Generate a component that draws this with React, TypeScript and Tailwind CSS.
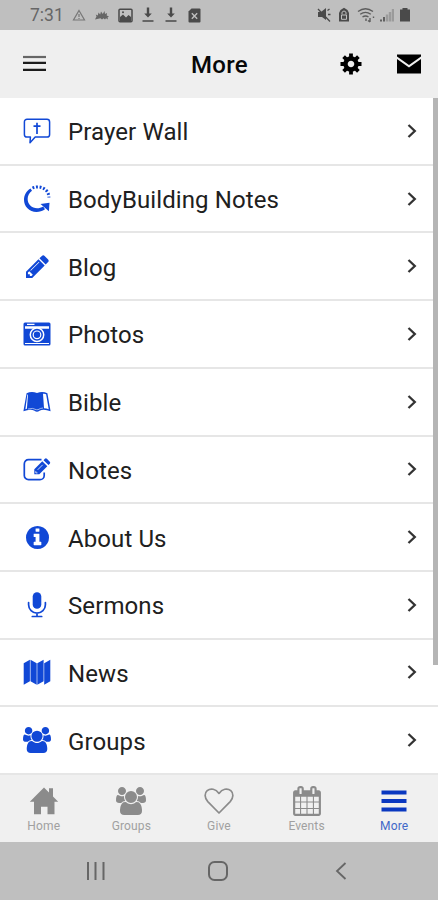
import React from 'react';

const GROUP_PATH =
  'M593 896q-162 5-265 128h-134q-82 0-138-40.5t-56-118.5q0-353 124-353 6 0 43.5 21t97.5 42.5 119 21.5q67 0 133-23-5 37-5 66 0 139 81 256zm1071 637q0 120-73 189.5t-194 69.5h-874q-121 0-194-69.5t-73-189.5q0-53 3.5-103.5t14-109 26.5-108.5 43-97.5 62-81 85.5-53.5 111.5-20q10 0 43 21.5t73 48 107 48 135 21.5 135-21.5 107-48 73-48 43-21.5q61 0 111.5 20t85.5 53.5 62 81 43 97.5 26.5 108.5 14 109 3.5 103.5zm-1024-1277q0 106-75 181t-181 75-181-75-75-181 75-181 181-75 181 75 75 181zm704 384q0 159-112.5 271.5t-271.5 112.5-271.5-112.5-112.5-271.5 112.5-271.5 271.5-112.5 271.5 112.5 112.5 271.5zm576 225q0 78-56 118.5t-138 40.5h-134q-103-123-265-128 81-117 81-256 0-29-5-66 66 23 133 23 59 0 119-21.5t97.5-42.5 43.5-21q124 0 124 353zm-128-609q0 106-75 181t-181 75-181-75-75-181 75-181 181-75 181 75 75 181z';

const GroupIcon = ({ className }: { className: string }) => (
  <svg viewBox="0 0 1920 1792" className={className} fill="currentColor">
    <path d={GROUP_PATH} />
  </svg>
);

const iconClass = 'w-7 h-7 shrink-0';

const PrayerIcon = () => (
  <svg viewBox="0 0 28 28" className={iconClass} fill="none" stroke="currentColor" strokeWidth="1.5" strokeLinejoin="round">
    <path d="M4 2.300h20a2.600 2.600 0 0 1 2.600 2.600v12.500a2.600 2.600 0 0 1-2.600 2.600H12.200L7 25.700 7.400 20H4a2.600 2.600 0 0 1-2.600-2.600V4.900A2.600 2.600 0 0 1 4 2.300z" />
    <path d="M14 5.800v11.200M10.500 9.200h7" strokeWidth="1.700" />
  </svg>
);

const RefreshIcon = () => (
  <svg viewBox="0 0 28 28" className={iconClass} fill="none" stroke="currentColor">
    <path d="M7.500 3.400C.2 7.500-1 17.500 4.200 23c4.600 5 12.300 5 17.800 1.300l-1.800-2.800c-4.200 2.600-9.700 2.400-12.900-1C3.300 16.500 3.800 9.500 9 5.800z" fill="currentColor" stroke="none" />
    <path d="M9.500 3C15 .6 21.500 2.200 24.500 7c.9 1.600 1.400 3.600 1.400 5.500" strokeWidth="3" strokeDasharray="1.900 1.700" />
    <path d="M17.500 19l9-1.300-.6 8.600z" fill="currentColor" stroke="none" />
  </svg>
);

const PencilIcon = () => (
  <svg viewBox="128 128 1536 1536" className="w-[23px] h-[23px] mx-[2.5px] shrink-0" fill="currentColor">
    <path d="M491 1536l91-91-235-235-91 91v107h128v128h107zm523-928q0-22-22-22-10 0-17 7l-542 542q-7 7-7 17 0 22 22 22 10 0 17-7l542-542q7-7 7-17zm-54-192l416 416-832 832h-416v-416zm683 96q0 53-37 90l-166 166-416-416 166-165q36-38 90-38 53 0 91 38l235 234q37 39 37 91z" />
  </svg>
);

const CameraIcon = () => (
  <svg viewBox="0 0 28 28" className={iconClass}>
    <rect x="0.5" y="2.500" width="27" height="23" rx="1.500" fill="currentColor" />
    <path d="M4 3.700h7.500v1.300H4zM2 6.200h24v2.600H2zM2 22.900h24v1.200H2z" fill="white" />
    <circle cx="14" cy="14.800" r="6.700" fill="currentColor" stroke="white" strokeWidth="1.500" />
    <circle cx="14" cy="14.800" r="3.800" fill="none" stroke="white" strokeWidth="1.200" />
  </svg>
);

const BookIcon = () => (
  <svg viewBox="0 0 28 28" className={iconClass}>
    <path d="M3.600 5.300Q8.500 2.700 14 5Q19.500 2.700 24.400 5.300L27.600 23.300Q20.500 20.500 16.500 22.800Q14 24.500 11.500 22.800Q7.500 20.500 .4 23.300z" fill="currentColor" />
    <path d="M4.300 6.700l.7-.3L3.900 20.800l-1.500.4z" fill="white" />
    <path d="M20 5.800Q22 5.500 23.100 6.200L25.700 21.300Q23.500 20.300 21 20.300z" fill="white" />
    <path d="M5 21Q10 19.500 13.300 21.700H15Q17.500 20 20 20" fill="none" stroke="white" strokeWidth=".6" />
  </svg>
);

const NotesIcon = () => (
  <svg viewBox="0 0 28 28" className={iconClass} fill="none" stroke="currentColor">
    <path d="M18.500 4.700H5.500A4.200 4.200 0 0 0 1.300 8.900v11.500a4.200 4.200 0 0 0 4.200 4.200H17a4.200 4.200 0 0 0 4.200-4.200v-3" strokeWidth="1.700" />
    <path d="M11.300 14.300l8-8 5 5-8 8h-5zM20.500 5.200l1.400-1.400q1-.9 2 0l2.900 2.900q.9 1 0 2l-1.300 1.400z" fill="currentColor" stroke="none" />
    <path d="M14.700 14.800l5-5M12.800 16.200v1.700h1.700" stroke="white" strokeWidth=".8" />
  </svg>
);

const InfoIcon = () => (
  <svg viewBox="128 128 1536 1536" className="w-[23px] h-[23px] mx-[2.5px] shrink-0" fill="currentColor">
    <path d="M1152 1376v-160q0-14-9-23t-23-9h-96v-512q0-14-9-23t-23-9h-320q-14 0-23 9t-9 23v160q0 14 9 23t23 9h96v320h-96q-14 0-23 9t-9 23v160q0 14 9 23t23 9h448q14 0 23-9t9-23zm-128-896v-160q0-14-9-23t-23-9h-192q-14 0-23 9t-9 23v160q0 14 9 23t23 9h192q14 0 23-9t9-23zm640 416q0 209-103 385.500t-279.500 279.500-385.500 103-385.500-103-279.500-279.500-103-385.500 103-385.500 279.500-279.500 385.500-103 385.500 103 279.500 279.500 103 385.500z" />
  </svg>
);

const MicIcon = () => (
  <svg viewBox="0 0 28 28" className={iconClass} fill="none" stroke="currentColor" strokeWidth="1.700" strokeLinecap="round">
    <rect x="9.700" y="1.300" width="8.600" height="16.500" rx="4.300" fill="currentColor" stroke="none" />
    <path d="M5.600 11.500v2.200a8.400 8.400 0 0 0 16.800 0v-2.200M14 22v3.300M9.300 25.500h9.400" />
  </svg>
);

const MapIcon = () => (
  <svg viewBox="0 0 28 28" className={iconClass} fill="currentColor">
    <path d="M.7 5.300L6.900 1.800v21.500L.7 26.800zM7.500 1.800l6.200 3.500v21.500l-6.200-3.500zM14.300 5.300l6.300-3.500v21.500l-6.300 3.500zM21.200 23.300V5.300l6.100-3.500v21.500l-6.100 3.500z" />
  </svg>
);

const menuItems = [
  { label: 'Prayer Wall', icon: <PrayerIcon /> },
  { label: 'BodyBuilding Notes', icon: <RefreshIcon /> },
  { label: 'Blog', icon: <PencilIcon /> },
  { label: 'Photos', icon: <CameraIcon /> },
  { label: 'Bible', icon: <BookIcon /> },
  { label: 'Notes', icon: <NotesIcon /> },
  { label: 'About Us', icon: <InfoIcon /> },
  { label: 'Sermons', icon: <MicIcon /> },
  { label: 'News', icon: <MapIcon /> },
  { label: 'Groups', icon: <GroupIcon className={iconClass} /> },
];

const HomeIcon = () => (
  <svg viewBox="0 0 30 30" className="w-[30px] h-[30px]" fill="currentColor">
    <path d="M15 1.500l5 5V2.300h4v8.200l5.200 5.300h-3.700v12.400h-7v-7.500h-6.500v7.500H5V15.800H.8z" />
  </svg>
);

const HeartIcon = () => (
  <svg viewBox="0 0 30 30" className="w-[30px] h-[30px]" fill="none" stroke="currentColor" strokeWidth="1.700" strokeLinejoin="round">
    <path d="M15 27L3.800 15.600C.2 11.500.5 7 3.200 4.700c3.500-3 8.600-1.800 11.800 2.700 3.200-4.500 8.300-5.700 11.800-2.700 2.700 2.300 3 6.800-.6 10.900z" />
  </svg>
);

const CalendarIcon = () => (
  <svg viewBox="0 0 1664 1792" className="w-[28px] h-[30px]" fill="currentColor">
    <path d="M128 1664h288v-288h-288v288zm352 0h320v-288h-320v288zm-352-352h288v-320h-288v320zm352 0h320v-320h-320v320zm-352-384h288v-288h-288v288zm736 736h320v-288h-320v288zm-384-736h320v-288h-320v288zm768 736h288v-288h-288v288zm-384-352h320v-320h-320v320zm-352-864v-288q0-13-9.500-22.500t-22.500-9.500h-64q-13 0-22.500 9.500t-9.500 22.500v288q0 13 9.500 22.500t22.500 9.500h64q13 0 22.500-9.500t9.500-22.500zm736 864h288v-320h-288v320zm-384-384h320v-288h-320v288zm384 0h288v-288h-288v288zm32-480v-288q0-13-9.500-22.500t-22.500-9.500h-64q-13 0-22.500 9.500t-9.500 22.500v288q0 13 9.500 22.500t22.500 9.500h64q13 0 22.500-9.500t9.500-22.500zm384-64v1280q0 52-38 90t-90 38h-1408q-52 0-90-38t-38-90v-1280q0-52 38-90t90-38h128v-96q0-66 47-113t113-47h64q66 0 113 47t47 113v96h384v-96q0-66 47-113t113-47h64q66 0 113 47t47 113v96h128q52 0 90 38t38 90z" />
  </svg>
);

const BarsIcon = () => (
  <svg viewBox="0 0 26 30" className="w-[26px] h-[30px]" fill="currentColor">
    <path d="M.5 4.500h25v4H.5zM.5 13h25v4H.5zM.5 21.500h25v4H.5z" />
  </svg>
);

const tabs = [
  { label: 'Home', icon: <HomeIcon /> },
  { label: 'Groups', icon: <GroupIcon className="w-[30px] h-[28px]" /> },
  { label: 'Give', icon: <HeartIcon /> },
  { label: 'Events', icon: <CalendarIcon /> },
  { label: 'More', icon: <BarsIcon />, active: true },
];

const DownloadIcon = () => (
  <svg viewBox="0 0 12 16" className="w-3 h-4" fill="currentColor">
    <path d="M4.800.5h2.400v6h2.600L6 10.600 2.200 6.500h2.600zM.5 13.300h11v1.500H.5z" />
  </svg>
);

const StatusBar = () => (
  <div className="h-[30px] shrink-0 bg-[#bfbfbf] text-[#4a4a4a] flex items-center justify-between pl-[30px] pr-[27px]">
    <div className="flex items-center">
      <span className="w-[33px] text-[17.500px] leading-none text-[#666] pt-px">7:31</span>
      <svg viewBox="0 0 14 14" className="w-3.5 h-3.5 ml-[9px] text-[#777]" fill="none" stroke="currentColor" strokeWidth="1.200">
        <path d="M7 2.500L12.500 12h-11zM7 6v3M7 10v1" />
      </svg>
      <svg viewBox="0 0 14 14" className="w-3.5 h-3.5 ml-[9px] text-[#666]" fill="currentColor">
        <path d="M0 11.500L1.500 8.500.8 6.500l2 1L3.500 4.500l1.700 2L6 3.500l1.800 2.500L9.500 3l.5 3 2-1-.3 2.500L14 8.500 12.500 9.500l.5 2-2-1.200-1 1.200-1.500-1.200-1.500 1.200-1.500-1.300z" />
      </svg>
      <svg viewBox="0 0 15 15" className="w-[15px] h-[15px] ml-[9px]">
        <rect x="1" y="1.300" width="13" height="12.400" rx="1" fill="none" stroke="currentColor" strokeWidth="1.500" />
        <path d="M2 12l0-3 3-2.500 3 3L10.500 7 13 9v4H2z" fill="currentColor" />
        <circle cx="5" cy="4.300" r="1" fill="currentColor" />
      </svg>
      <div className="flex gap-[11px] ml-[9px]">
        <DownloadIcon />
        <DownloadIcon />
      </div>
      <svg viewBox="0 0 13 15" className="w-[13px] h-[15px] ml-[11px]">
        <path d="M3.500.5h8q1 0 1 1v12q0 1-1 1h-10q-1 0-1-1v-10z" fill="currentColor" />
        <path d="M3.800 5.300l5.400 5.400M9.200 5.300l-5.400 5.400" stroke="#bfbfbf" strokeWidth="1.400" />
      </svg>
    </div>
    <div className="flex items-center">
      <svg viewBox="0 0 14 16" className="w-3.5 h-4" fill="currentColor">
        <path d="M1 5h3l5-4v12L5 10H1z" />
        <path d="M10.500 3.500l2-1.500M11 7.500h2.500M1 2l12 12.500" stroke="currentColor" strokeWidth="1.300" />
      </svg>
      <svg viewBox="0 0 12 16" className="w-3 h-4 ml-[7px]">
        <path d="M6 .8L9.500 3 11 6v8.500H1V6l1.500-3z" fill="currentColor" />
        <path d="M4 7.500V5.200q2-2.600 4 0v2.300M3.500 8h5v4.300h-5z" fill="none" stroke="#bfbfbf" strokeWidth="1" />
      </svg>
      <svg viewBox="0 0 18 16" className="w-[18px] h-4 ml-[7px] text-[#5d5d5d]" fill="none" stroke="currentColor" strokeWidth="1.400">
        <path d="M1 4.500Q8.500-1 16 4.500M3.200 7.300q5.300-3.800 10.600 0M5.500 10q3-2 6 0" />
        <path d="M9 11.500v2.500M13 11v4M16.500 9.500v1.500M11 13.500l2 1.500" />
      </svg>
      <svg viewBox="0 0 14 16" className="w-3.5 h-4 ml-[5px]">
        <path d="M1 14.500v-2M4 14.500v-4.500" stroke="#606060" strokeWidth="2" />
        <path d="M7 14.500V7.500M10 14.500V5M13 14.500V2" stroke="#9b9b9b" strokeWidth="2.400" />
      </svg>
      <svg viewBox="0 0 12 16" className="w-3 h-4 ml-[5px]" fill="currentColor">
        <path d="M3.500 1h5v1.500H11v12H1v-12h2.500z" />
      </svg>
    </div>
  </div>
);

const Header = () => (
  <header className="h-[68px] shrink-0 bg-[#efefef] flex items-center justify-between pl-[23px] pr-[17px]">
    <div className="w-[100px]">
      <svg viewBox="0 0 23 18" className="w-[23px] h-[18px]">
        <path d="M0 2h23" stroke="#666" strokeWidth="2.200" />
        <path d="M0 7.900h23M0 14.900h23" stroke="#1c1c1c" strokeWidth="2.200" />
      </svg>
    </div>
    <h1 className="ml-[-5px] pt-px text-2xl font-medium leading-none tracking-[0.300px] text-[#080808]">More</h1>
    <div className="w-[100px] flex items-center justify-end gap-[35px]">
      <svg viewBox="-11 -11 22 22" className="w-[22px] h-[22px]">
        <circle r="5.500" fill="none" stroke="black" strokeWidth="4.400" />
        <path d="M0-10.500V-6M0 10.500V6M-10.500 0H-6M10.500 0H6M-7.400-7.400l3 3M7.400 7.400l-3-3M-7.400 7.400l3-3M7.400-7.400l-3 3" stroke="black" strokeWidth="3.800" />
      </svg>
      <svg viewBox="0 0 24 20" className="w-6 h-5">
        <path d="M0 0.500h24v2L12 11 0 2.500zM0 5l12 8.500L24 5v14.500H0z" fill="black" />
      </svg>
    </div>
  </header>
);

export default function App() {
  return (
    <div className="relative w-[438px] h-[900px] overflow-hidden flex flex-col bg-white font-[Roboto,sans-serif]">
      <StatusBar />
      <Header />

      <main className="flex-1 flex flex-col">
        {menuItems.map((item) => (
          <div key={item.label} className="flex-1 flex items-center border-b-2 border-[#e6e6e6] pl-[23px] pr-[21px]">
            <span className="text-[#1148d6]">{item.icon}</span>
            <span className="flex-1 ml-[17px] pt-[3px] text-2xl leading-none tracking-[0.100px] text-[#202020]">{item.label}</span>
            <svg viewBox="0 0 10 16" className="w-[10px] h-4" fill="none" stroke="#333" strokeWidth="2.300">
              <path d="M1.500 2L7.800 8l-6.300 6" />
            </svg>
          </div>
        ))}
      </main>

      {/* Scrollbar */}
      <div className="absolute right-0 top-[98px] w-[5px] h-[567px] bg-[#b5b5b5]" />

      <nav className="h-[67px] shrink-0 bg-[#f0f0f0] grid grid-cols-5 pt-[11px]">
        {tabs.map((tab) => (
          <div key={tab.label} className={`flex flex-col items-center ${tab.active ? 'text-[#0a38c0]' : 'text-[#8b8b8b]'}`}>
            <div className="h-[30px] flex items-center">{tab.icon}</div>
            <span className={`mt-1 text-xs leading-none tracking-[0.150px] ${tab.active ? 'text-[#4168c8]' : 'text-[#a0a0a0]'}`}>{tab.label}</span>
          </div>
        ))}
      </nav>

      {/* System navigation */}
      <div className="h-[58px] shrink-0 bg-[#bfbfbf] flex items-center pl-[86px] text-[#666]">
        <svg viewBox="0 0 20 20" className="w-5 h-5" stroke="currentColor" strokeWidth="2">
          <path d="M2 1v18M9.500 1v18M17.500 1v18" />
        </svg>
        <svg viewBox="0 0 22 22" className="w-[22px] h-[22px] ml-[101px]" fill="none" stroke="currentColor" strokeWidth="2">
          <rect x="2" y="2" width="18" height="18" rx="5.500" />
        </svg>
        <svg viewBox="0 0 12 20" className="w-3 h-5 ml-[106px]" fill="none" stroke="currentColor" strokeWidth="1.800">
          <path d="M10.500 2L2 10l8.500 8" />
        </svg>
      </div>
    </div>
  );
}
